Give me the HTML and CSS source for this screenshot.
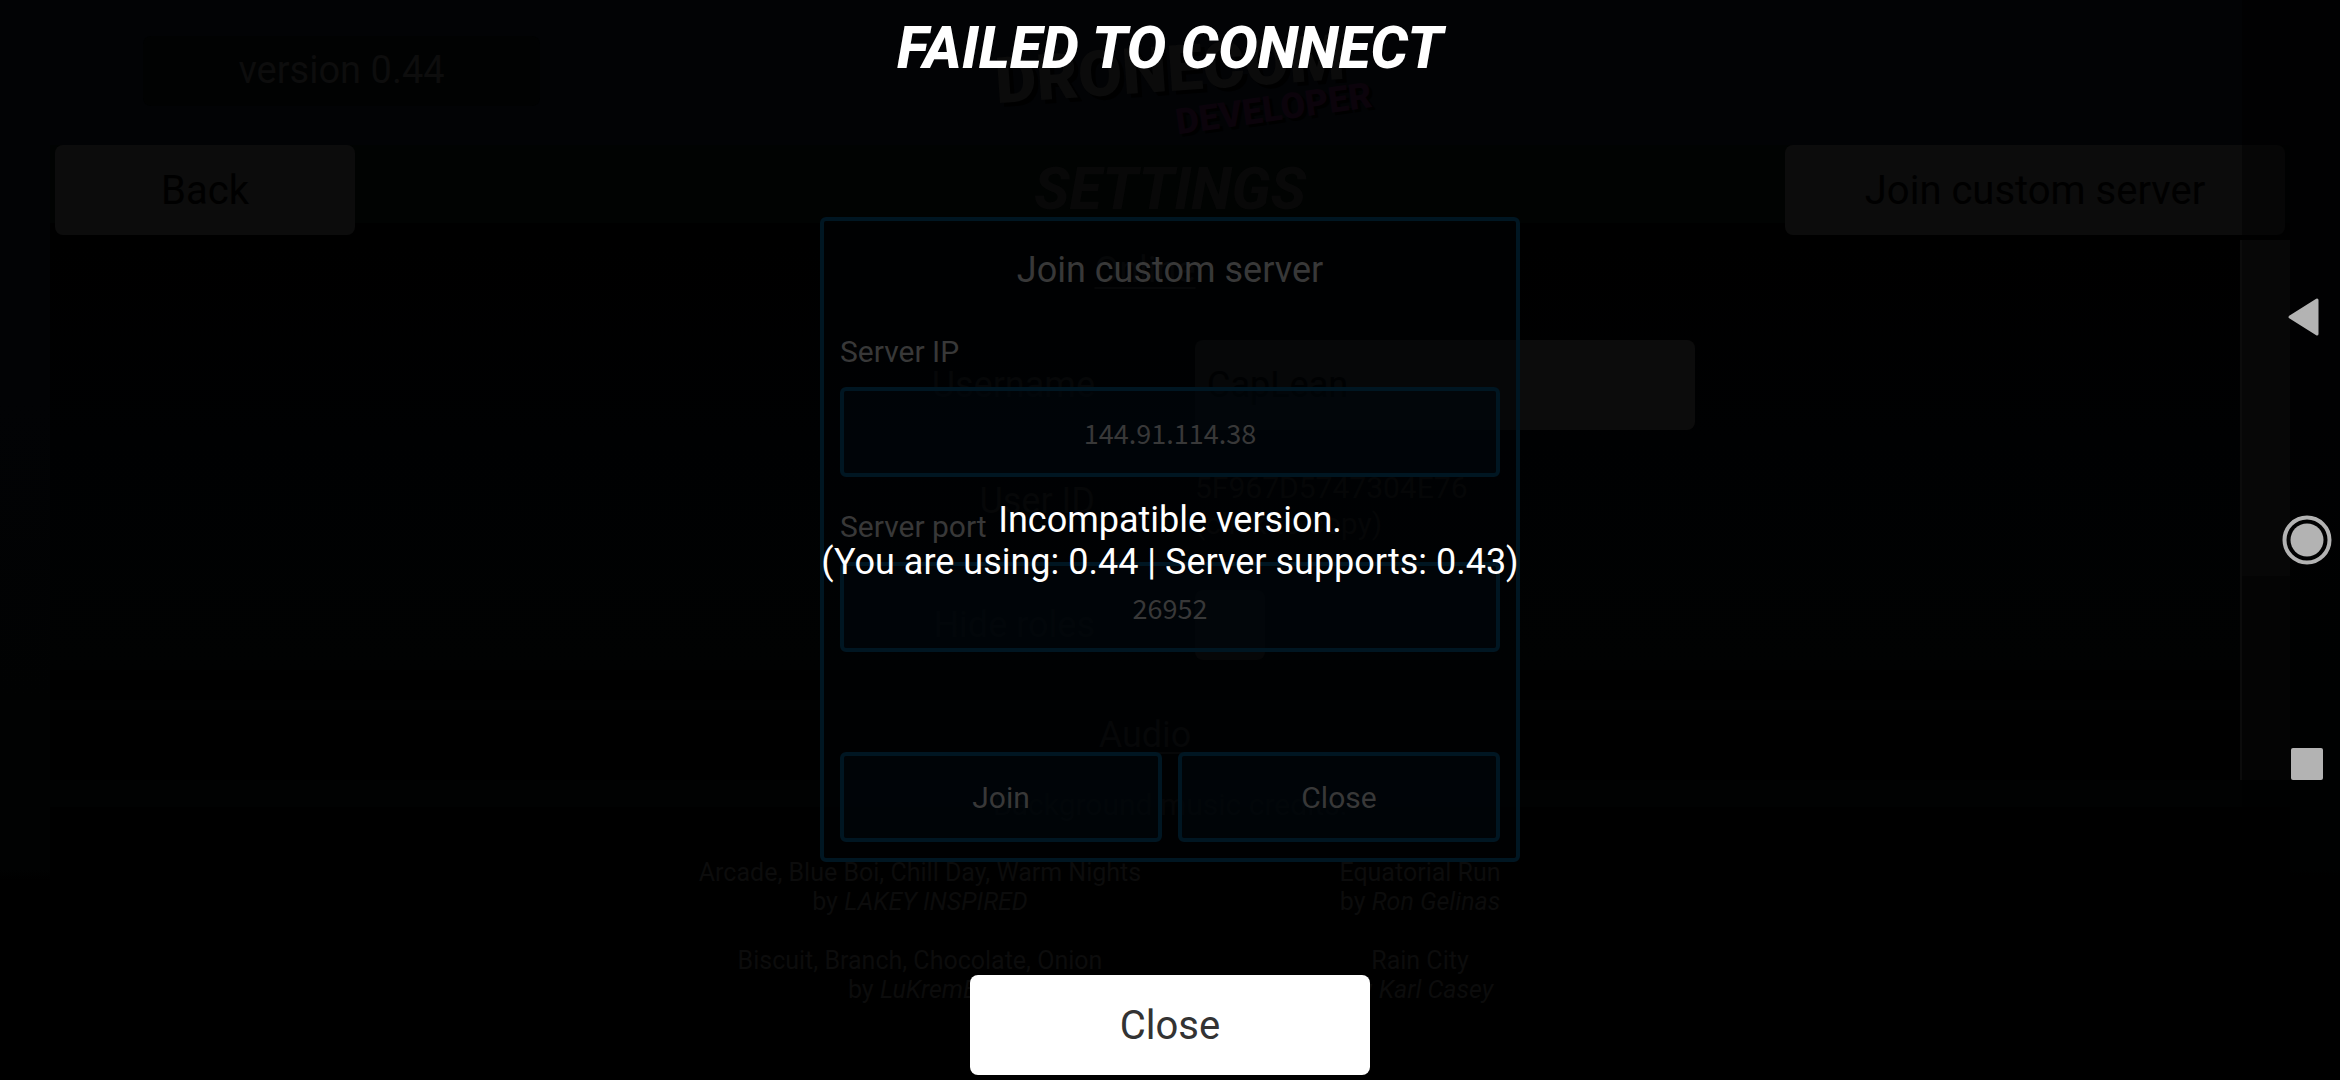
FILE: index.html
```html
<!DOCTYPE html>
<html lang="en">
<head>
<meta charset="utf-8">
<title>Failed to connect</title>
<link rel="stylesheet" href="styles.css">
</head>
<body>
<div class="stage">
  <main class="settings">
    <header class="top">
      <p class="version">version 0.44</p>
      <div class="logo"><span class="logo-name">DRONECOM</span><span class="logo-tag">DEVELOPER</span></div>
    </header>
    <div class="toolbar">
      <button class="bar-button back" type="button">Back</button>
      <h1 class="display page-title">SETTINGS</h1>
      <button class="bar-button join-custom" type="button">Join custom server</button>
    </div>
    <div class="scroller">
      <div class="content">
        <section class="panel online">
          <h2 class="section-title">Online</h2>
          <div class="fields">
            <label class="field-label" for="username">Username</label>
            <input class="field-input" id="username" type="text" value="CapLean">
            <span class="field-label id-label">User ID</span>
            <span class="user-id">5F967D5747304E76<br>(click to copy)</span>
            <label class="field-label" for="roles">Hide roles</label>
            <input class="field-check" id="roles" type="checkbox">
          </div>
        </section>
        <section class="panel audio">
          <h2 class="section-title">Audio</h2>
        </section>
        <section class="credits">
          <h3 class="credits-title">Background music credits:</h3>
          <div class="credit-grid">
            <p>Arcade, Blue Boi, Chill Day, Warm Nights<br>by <em>LAKEY INSPIRED</em></p>
            <p>Equatorial Run<br>by <em>Ron Gelinas</em></p>
            <p>Biscuit, Branch, Chocolate, Onion<br>by <em>LuKremBo</em></p>
            <p>Rain City<br>by <em>Karl Casey</em></p>
          </div>
        </section>
      </div>
      <div class="scrollbar"><div class="thumb"></div></div>
    </div>
  </main>

  <form class="dialog">
    <h2 class="dialog-title">Join custom server</h2>
    <label class="dialog-label" for="ip">Server IP</label>
    <input class="box dialog-input" id="ip" type="text" value="144.91.114.38">
    <label class="dialog-label" for="port">Server port</label>
    <input class="box dialog-input" id="port" type="text" value="26952">
    <div class="dialog-actions">
      <button class="box dialog-button" type="button">Join</button>
      <button class="box dialog-button" type="button">Close</button>
    </div>
  </form>

  <section class="alert">
    <h2 class="display alert-title">FAILED TO CONNECT</h2>
    <p class="alert-message">Incompatible version.<br>(You are using: 0.44 | Server supports: 0.43)</p>
    <button class="alert-close" type="button">Close</button>
  </section>

  <nav class="system-nav">
    <button class="nav-button" type="button" aria-label="Back">
      <svg width="50" height="50" viewBox="0 0 50 50"><path d="M35 9v34L8 26z" fill="#b3b3b3" stroke="#b3b3b3" stroke-width="3" stroke-linejoin="round"/></svg>
    </button>
    <button class="nav-button" type="button" aria-label="Home">
      <svg width="50" height="50" viewBox="0 0 50 50"><circle cx="25" cy="25" r="22.5" fill="none" stroke="#b3b3b3" stroke-width="4"/><circle cx="25" cy="25" r="16.5" fill="#b3b3b3"/></svg>
    </button>
    <button class="nav-button" type="button" aria-label="Recent apps">
      <svg width="50" height="50" viewBox="0 0 50 50"><rect x="9" y="9" width="32" height="32" rx="2" fill="#b3b3b3"/></svg>
    </button>
  </nav>
</div>
</body>
</html>
```
FILE: styles.css
```css
* { box-sizing: border-box; }
body { margin: 0; background: #000; font-family: Roboto, "Open Sans", sans-serif; }
h1, h2, h3, p { margin: 0; font-weight: 400; }
button, input { font: inherit; margin: 0; padding: 0; border: 0; }

/* Every layer shares one grid cell, so later ones lie over earlier ones. */
.stage { display: grid; grid-template-columns: minmax(0, 1fr); min-height: 100vh; overflow: hidden; background: linear-gradient(#020305, #020305 400px, #010202 700px, #010202 870px, #000 880px); }
.stage > * { grid-area: 1 / 1; isolation: isolate; }

.display { font-weight: 800; font-style: italic; font-size: 59px; line-height: 64px; }

/* Settings page */
.settings { display: flex; flex-direction: column; }
.top { display: grid; grid-template-columns: 1fr auto 1fr; height: 145px; }
.version { width: 397px; height: 70px; margin: 36px 0 0 143px; border-radius: 8px; background: #010202; color: #0d0d0d; font-size: 38px; line-height: 68px; text-align: center; }
.logo { display: flex; flex-direction: column; width: 400px; padding-top: 32px; font-weight: 900; transform: rotate(-4deg); }
.logo-name { align-self: center; color: #0b0b0b; font-size: 64px; line-height: 76px; text-shadow: 4px 4px 0 #000; }
.logo-tag { align-self: flex-end; margin-top: -8px; color: #0b030b; font-size: 36px; line-height: 32px; transform: rotate(-4deg); text-shadow: 3px 3px 0 #000; }
.toolbar { display: grid; grid-template-columns: 1fr auto 1fr; margin: 0 50px; padding: 0 5px 5px; background: linear-gradient(#010302 78px, #000 78px); }
.bar-button { height: 90px; border-radius: 8px; background: #0c0c0c; color: #000; font-size: 40px; }
.back { width: 300px; }
.join-custom { width: 500px; justify-self: end; }
.page-title { padding-top: 12px; color: #080808; }
.scroller { display: flex; flex: 1; padding: 0 50px; }
.content { display: flex; flex: 1; flex-direction: column; background: #010202; }
.panel { background: #000; }
.online { height: 460px; margin-bottom: 10px; padding-top: 5px; background: linear-gradient(#000, #000102 200px, #010202 430px, #000 430px); }
.section-title { color: #0c0c0c; font-size: 36px; line-height: 50px; text-align: center; text-decoration: underline; text-decoration-thickness: 2px; text-underline-offset: 5px; }
.fields { display: grid; grid-template-columns: 1045px 500px; column-gap: 100px; row-gap: 35px; align-items: center; padding-top: 45px; }
.field-label { color: #0c0c0c; font-size: 36px; text-align: right; }
.id-label { padding-bottom: 18px; }
.field-input { height: 90px; padding: 0 12px; border-radius: 8px; background: #0c0c0c; color: #000; font-size: 36px; }
.user-id { height: 90px; padding-top: 5px; color: #0b0b0b; font-size: 30px; line-height: 36px; }
.field-check { appearance: none; width: 70px; height: 70px; border-radius: 8px; background: #0c0c0c; }
.audio { height: 70px; }

/* The credits are centred on the page, so they reach under the scrollbar. */
.credits { flex: 1; margin-right: -50px; padding-top: 5px; background: linear-gradient(#010202 27px, #000 27px); }
.credits-title { color: #0b0b0b; font-size: 30px; line-height: 40px; text-align: center; }
.credit-grid { display: grid; grid-template-columns: 500px 500px; justify-content: center; row-gap: 30px; padding-top: 33px; color: #0c0c0c; font-size: 25px; line-height: 29px; text-align: center; }
.scrollbar { width: 50px; height: 540px; background: #080808; border-left: 2px solid #0c0c0c; }
.thumb { height: 336px; background: #0e0e0e; }

/* Join dialog */
.dialog { align-self: start; justify-self: center; display: flex; flex-direction: column; width: 700px; margin-top: 217px; padding: 16px; border: 4px solid #001622; border-radius: 6px; background: rgba(0, 1, 3, .5); color: #383838; font-size: 30px; }
.dialog-title { height: 90px; font-size: 36px; line-height: 66px; text-align: center; }
.dialog-label { height: 60px; line-height: 50px; }
.box { height: 90px; border: 4px solid #001622; border-radius: 6px; background: rgba(0, 6, 12, .6); color: #383838; }
.dialog-input { margin-bottom: 25px; text-align: center; font-family: "Noto Sans CJK JP", "Noto Sans", sans-serif; font-size: 27px; }
.dialog-actions { display: grid; grid-template-columns: 1fr 1fr; gap: 16px; padding-top: 75px; }

/* Connection alert */
.alert { display: flex; flex-direction: column; align-items: center; justify-content: space-between; padding: 16px 0 5px; color: #fff; }
.alert-title { padding-bottom: 26px; }
.alert-message { font-size: 36px; line-height: 42px; text-align: center; }
.alert-close { width: 400px; height: 100px; border-radius: 8px; background: #fff; color: #333; font-size: 40px; }

/* Android navigation bar */
.system-nav { justify-self: end; display: flex; flex-direction: column; justify-content: center; gap: 174px; align-items: flex-end; width: 98px; padding-right: 8px; background: rgba(0, 0, 0, .5); }
.nav-button { width: 50px; height: 50px; background: none; }
.nav-button svg { display: block; }
```
